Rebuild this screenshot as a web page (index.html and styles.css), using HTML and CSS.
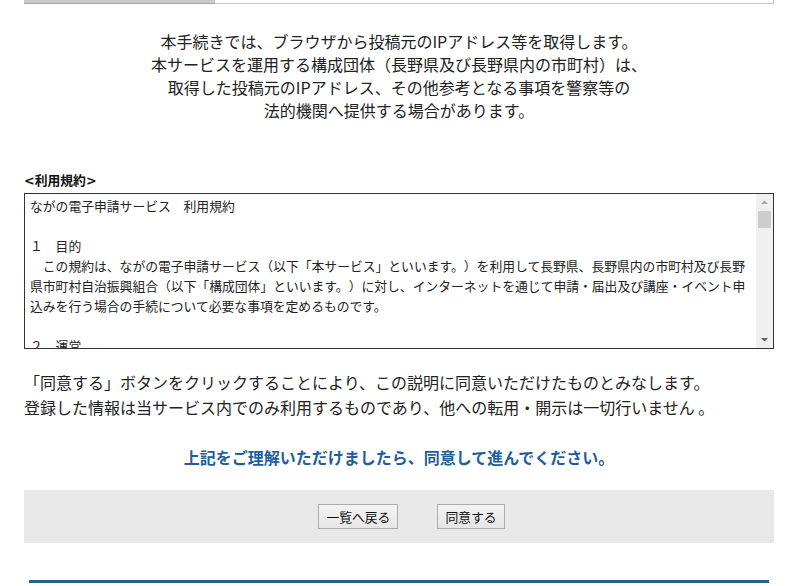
FILE: index.html
```html
<!DOCTYPE html>
<html lang="ja">
<head>
<meta charset="utf-8">
<title>ながの電子申請サービス 利用規約</title>
<link rel="stylesheet" href="styles.css">
</head>
<body>
<div class="page">
  <div class="progress">
    <div class="progress-done"></div>
    <div class="progress-rest"></div>
  </div>

  <div class="notice">
    <p>本手続きでは、ブラウザから投稿元のIPアドレス等を取得します。</p>
    <p>本サービスを運用する構成団体（長野県及び長野県内の市町村）は、</p>
    <p>取得した投稿元のIPアドレス、その他参考となる事項を警察等の</p>
    <p>法的機関へ提供する場合があります。</p>
  </div>

  <div class="terms-label">&lt;利用規約&gt;</div>
  <div class="terms-box">
    <div class="terms">ながの電子申請サービス　利用規約

１　目的
　この規約は、ながの電子申請サービス（以下「本サービス」といいます。）を利用して長野県、長野県内の市町村及び長野
県市町村自治振興組合（以下「構成団体」といいます。）に対し、インターネットを通じて申請・届出及び講座・イベント申
込みを行う場合の手続について必要な事項を定めるものです。

２　運営
　本サービスは、構成団体が共同で運営します。

３　利用規約の同意
　本サービスを利用して申請・届出等の手続を行うためには、この規約に同意していただく
ことが必要です。本サービスを利用された方は、この規約に同意したものとみなします。

４　利用者登録
　本サービスの利用に当たっては、利用者登録を行う必要がある手続があります。</div>
    <div class="scrollbar" aria-hidden="true">
      <div class="sb-btn">
        <svg width="17" height="17" viewBox="0 0 17 17"><path d="M5 10h7L8.5 6.5z" fill="#a8a8a8"/></svg>
      </div>
      <div class="sb-thumb"></div>
      <div class="sb-track"></div>
      <div class="sb-btn">
        <svg width="17" height="17" viewBox="0 0 17 17"><path d="M5 7h7L8.5 10.5z" fill="#606060"/></svg>
      </div>
    </div>
  </div>

  <div class="consent">
    <p>「同意する」ボタンをクリックすることにより、この説明に同意いただけたものとみなします。</p>
    <p>登録した情報は当サービス内でのみ利用するものであり、他への転用・開示は一切行いません 。</p>
  </div>

  <p class="guide">上記をご理解いただけましたら、同意して進んでください。</p>

  <div class="actions">
    <button type="button" class="btn">一覧へ戻る</button>
    <button type="button" class="btn">同意する</button>
  </div>

  <div class="footer-rule"></div>
</div>
</body>
</html>
```

FILE: styles.css
```css
html, body {
  margin: 0;
  padding: 0;
  background: #ffffff;
}

body {
  font-family: "Noto Sans CJK JP", "Noto Sans", sans-serif;
  color: #222222;
  text-spacing-trim: space-all;
}

p {
  margin: 0;
}

.page {
  width: 750px;
  margin-left: 24px;
}

.progress {
  display: flex;
  height: 4px;
}

.progress-done {
  width: 191px;
  background: #c9c9c9;
  border-bottom: 1px solid #a4a4a4;
}

.progress-rest {
  flex: 1;
  border-bottom: 1px solid #c4c4c4;
  border-right: 1px solid #c4c4c4;
}

.notice {
  margin-top: 26px;
  text-align: center;
  font-size: 16px;
  line-height: 23px;
  color: #222222;
}

.terms-label {
  margin-top: 50px;
  font-family: "DejaVu Sans", "Noto Sans CJK JP", sans-serif;
  font-size: 12.8px;
  line-height: 18px;
  font-weight: bold;
  color: #111111;
}

.terms-box {
  margin-top: 3px;
  height: 154px;
  border: 1px solid #333333;
  display: flex;
}

.terms {
  flex: 1;
  min-width: 0;
  padding: 2px 0 0 5px;
  overflow: hidden;
  white-space: pre;
  font-size: 12.8px;
  line-height: 20px;
  color: #222222;
}

.scrollbar {
  width: 17px;
  display: flex;
  flex-direction: column;
  background: #f0f0f0;
}

.sb-btn {
  height: 17px;
  display: flex;
}

.sb-thumb {
  height: 17px;
  margin: 0 2px 0 2px;
  background: #cdcdcd;
}

.sb-track {
  flex: 1;
}

.consent {
  margin-top: 21px;
  font-size: 16px;
  line-height: 25px;
  color: #222222;
}

.guide {
  margin-top: 25px;
  text-align: center;
  font-size: 16px;
  line-height: 24px;
  font-weight: bold;
  color: #1f5e9c;
}

.actions {
  margin-top: 21px;
  height: 53px;
  background: #e8e8e8;
  display: flex;
  justify-content: center;
  align-items: center;
  gap: 39px;
  padding-left: 25px;
  box-sizing: border-box;
}

.btn {
  height: 25px;
  padding: 0 7px;
  border: 1px solid #acacac;
  border-radius: 0;
  background: linear-gradient(#f3f3f3, #e6e6e6);
  font-family: "Noto Sans CJK JP", "Noto Sans", sans-serif;
  font-size: 12.8px;
  line-height: 23px;
  color: #111111;
}

.footer-rule {
  margin: 37px 5px 0 5px;
  height: 3px;
  background: #21628f;
}
```
